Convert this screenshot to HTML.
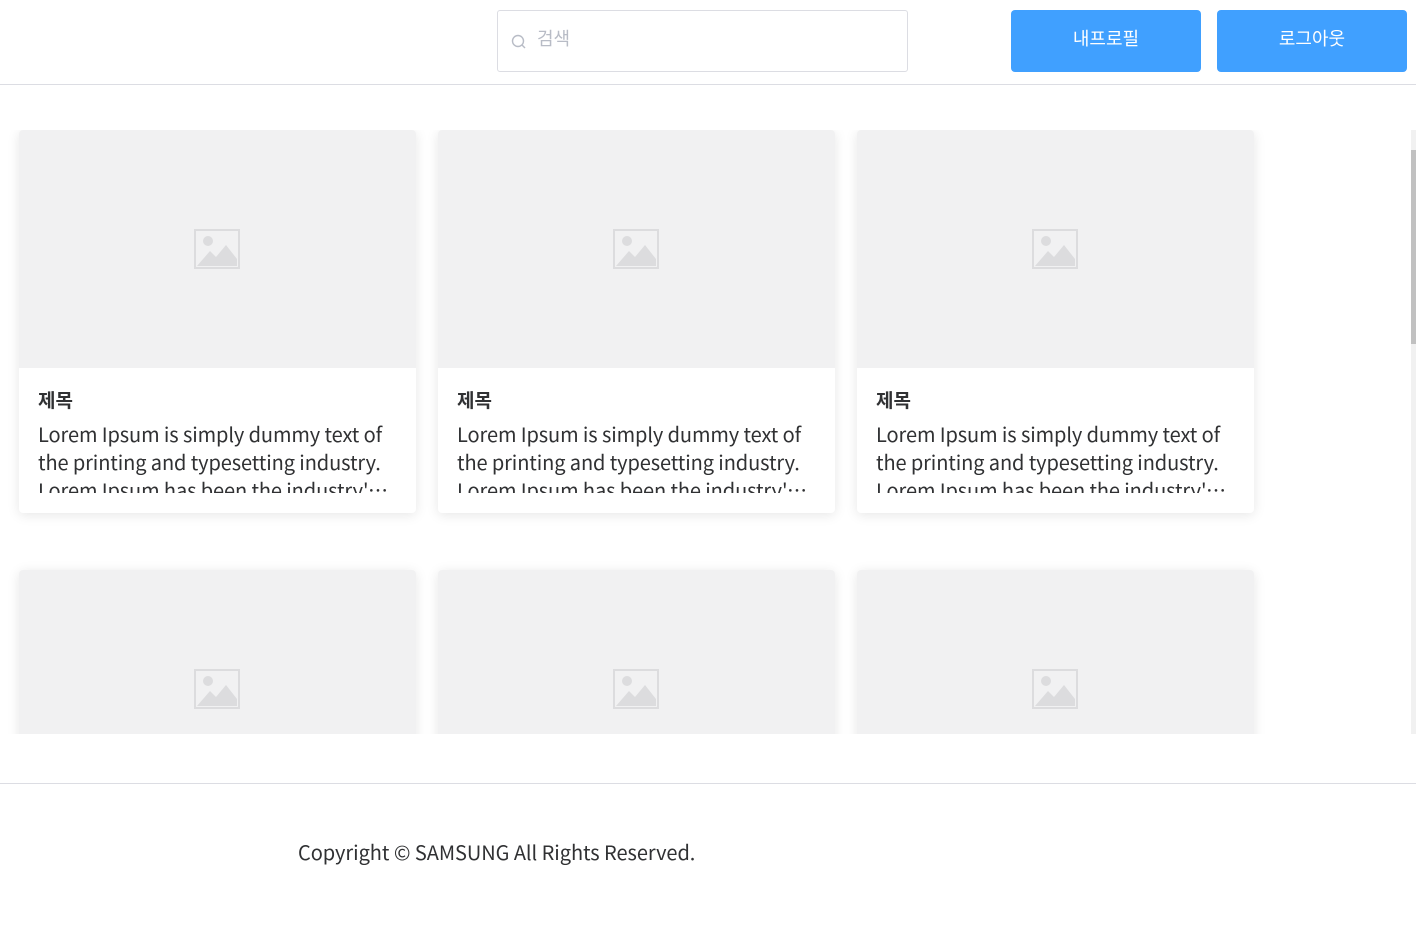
<!DOCTYPE html>
<html><head><meta charset="utf-8"><style>
*{box-sizing:border-box;margin:0;padding:0}
body{width:1416px;height:926px;overflow:hidden;background:#fff;font-family:"Noto Sans CJK KR","Liberation Sans",sans-serif;position:relative}
.hdr{position:absolute;left:0;top:0;width:1416px;height:85px;border-bottom:1px solid #dcdde3}
.search{position:absolute;left:497px;top:10px;width:411px;height:62px;border:1px solid #dcdde3;border-radius:3px;color:#b8bcc6;font-size:18px}
.search span{position:absolute;left:39px;top:14px;line-height:26px}
.search svg{position:absolute;left:13px;top:23px}
.btn{position:absolute;top:10px;width:190px;height:62px;background:#40a0ff;border-radius:4px;color:#fff;font-size:18px;text-align:center;line-height:56px}
.area{position:absolute;left:0;top:130px;width:1416px;height:604px;overflow:hidden}
.card{position:absolute;width:397px;height:383px;background:#fff;border-radius:4px;box-shadow:0 2px 12px rgba(0,0,0,.1);overflow:hidden}
.img{height:238px;background:#f1f1f2;position:relative}
.img svg{position:absolute;left:175px;top:99px}
.body{padding:16px 19px 0}
.t{font-size:19px;font-weight:bold;color:#303133;height:32px;line-height:32px}
.d{height:73px;overflow:hidden;margin-top:4px}
.d div{font-size:20px;line-height:28px;color:#303133;letter-spacing:-0.1px;display:-webkit-box;-webkit-line-clamp:3;-webkit-box-orient:vertical;overflow:hidden}
.sb{position:absolute;left:1411px;top:0;width:5px;height:604px;background:#f1f1f1}
.sb div{position:absolute;top:20px;width:5px;height:194px;background:#c1c1c1}
.ftr{position:absolute;left:0;top:783px;width:1416px;border-top:1px solid #dcdde3}
.copy{position:absolute;left:298px;top:837px;font-size:20px;line-height:30px;color:#303133;letter-spacing:-0.05px}
</style></head><body>
<div class="hdr">
<div class="search"><svg width="16" height="16" viewBox="0 0 16 16"><circle cx="7" cy="7" r="5.5" fill="none" stroke="#b8bcc6" stroke-width="1.4"/><path d="M11 11l3 3" stroke="#b8bcc6" stroke-width="1.4"/></svg><span>검색</span></div>
<div class="btn" style="left:1011px">내프로필</div>
<div class="btn" style="left:1217px">로그아웃</div>
</div>
<div class="area">
<div class="card" style="left:19px;top:0"><div class="img"><svg width="46" height="40" viewBox="0 0 46 40"><rect x="1" y="1" width="44" height="38" fill="none" stroke="#dcdcde" stroke-width="2"/><circle cx="14" cy="12" r="5" fill="#dcdcde"/><path d="M3 37L16 22l6 6 10-12 11 14v7z" fill="#dcdcde"/></svg></div><div class="body"><div class="t">제목</div><div class="d"><div>Lorem Ipsum is simply dummy text of the printing and typesetting industry. Lorem Ipsum has been the industry's standard dummy text ever since the 1500s</div></div></div></div>
<div class="card" style="left:438px;top:0"><div class="img"><svg width="46" height="40" viewBox="0 0 46 40"><rect x="1" y="1" width="44" height="38" fill="none" stroke="#dcdcde" stroke-width="2"/><circle cx="14" cy="12" r="5" fill="#dcdcde"/><path d="M3 37L16 22l6 6 10-12 11 14v7z" fill="#dcdcde"/></svg></div><div class="body"><div class="t">제목</div><div class="d"><div>Lorem Ipsum is simply dummy text of the printing and typesetting industry. Lorem Ipsum has been the industry's standard dummy text ever since the 1500s</div></div></div></div>
<div class="card" style="left:857px;top:0"><div class="img"><svg width="46" height="40" viewBox="0 0 46 40"><rect x="1" y="1" width="44" height="38" fill="none" stroke="#dcdcde" stroke-width="2"/><circle cx="14" cy="12" r="5" fill="#dcdcde"/><path d="M3 37L16 22l6 6 10-12 11 14v7z" fill="#dcdcde"/></svg></div><div class="body"><div class="t">제목</div><div class="d"><div>Lorem Ipsum is simply dummy text of the printing and typesetting industry. Lorem Ipsum has been the industry's standard dummy text ever since the 1500s</div></div></div></div>
<div class="card" style="left:19px;top:440px"><div class="img"><svg width="46" height="40" viewBox="0 0 46 40"><rect x="1" y="1" width="44" height="38" fill="none" stroke="#dcdcde" stroke-width="2"/><circle cx="14" cy="12" r="5" fill="#dcdcde"/><path d="M3 37L16 22l6 6 10-12 11 14v7z" fill="#dcdcde"/></svg></div></div>
<div class="card" style="left:438px;top:440px"><div class="img"><svg width="46" height="40" viewBox="0 0 46 40"><rect x="1" y="1" width="44" height="38" fill="none" stroke="#dcdcde" stroke-width="2"/><circle cx="14" cy="12" r="5" fill="#dcdcde"/><path d="M3 37L16 22l6 6 10-12 11 14v7z" fill="#dcdcde"/></svg></div></div>
<div class="card" style="left:857px;top:440px"><div class="img"><svg width="46" height="40" viewBox="0 0 46 40"><rect x="1" y="1" width="44" height="38" fill="none" stroke="#dcdcde" stroke-width="2"/><circle cx="14" cy="12" r="5" fill="#dcdcde"/><path d="M3 37L16 22l6 6 10-12 11 14v7z" fill="#dcdcde"/></svg></div></div>
<div class="sb"><div></div></div>
</div>
<div class="ftr"></div>
<div class="copy">Copyright © SAMSUNG All Rights Reserved.</div>
</body></html>
